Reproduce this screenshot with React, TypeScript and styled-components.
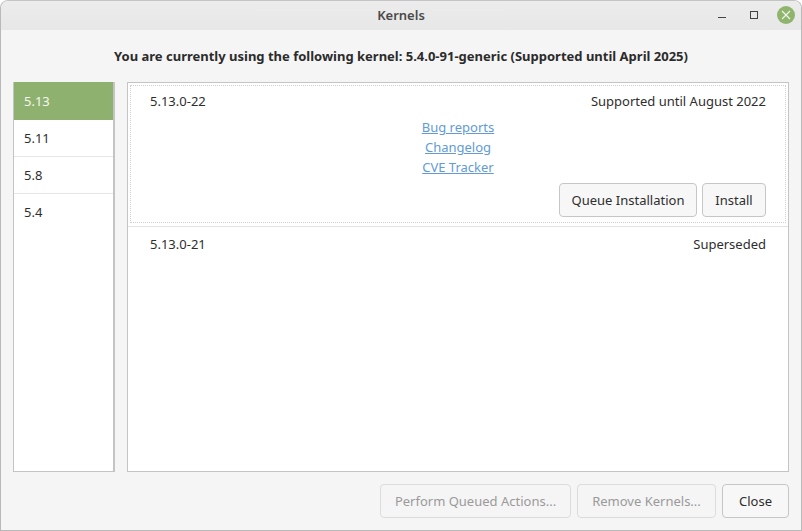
import React from 'react';
import styled, { createGlobalStyle } from 'styled-components';

const GlobalStyle = createGlobalStyle`
  html, body { margin: 0; padding: 0; background: #fff; }
  body { font-family: "Noto Sans", "Open Sans", sans-serif; font-size: 13px; color: #2e2e2e; }
`;

const Window = styled.div`
  box-sizing: border-box;
  width: 802px;
  height: 531px;
  display: flex;
  flex-direction: column;
  background: #f5f5f5;
  border: 1px solid #b9b9b9;
  border-top-color: #c4c4c4;
  border-radius: 8px 8px 0 0;
  overflow: hidden;
`;

const TitleBar = styled.header`
  position: relative;
  box-sizing: border-box;
  flex: 0 0 29px;
  padding-bottom: 2px;
  display: flex;
  align-items: center;
  justify-content: center;
  background: linear-gradient(#ececec, #e7e7e7);
  font-size: 13px;
  font-weight: 600;
  color: #4a4a4a;
`;

const WindowButtons = styled.div`
  position: absolute;
  right: 6px;
  top: 5px;
  display: flex;
  align-items: center;
`;

const WindowGlyph = styled.svg<{ $gap: number }>`
  width: 10px;
  height: 10px;
  margin-right: ${({ $gap }) => $gap}px;
`;

const CloseDot = styled.div`
  width: 18px;
  height: 18px;
  border-radius: 50%;
  background: #8fb46e;
  display: flex;
  align-items: center;
  justify-content: center;
`;

const Heading = styled.h1`
  margin: 0;
  padding: 17px 0 16px;
  height: 19px;
  line-height: 19px;
  box-sizing: content-box;
  text-align: center;
  font-size: 13px;
  font-weight: 700;
  color: #2b2b2b;
`;

const Panes = styled.div`
  flex: 1;
  display: flex;
  gap: 12px;
  padding: 0 12px;
  min-height: 0;
`;

const SideList = styled.ul`
  box-sizing: border-box;
  width: 102px;
  margin: 0;
  padding: 0;
  list-style: none;
  background: #fff;
  border: 1px solid #c4c4c4;
  border-right-width: 2px;
  border-top: 0;
`;

const SideItem = styled.li<{ $active?: boolean }>`
  box-sizing: border-box;
  height: ${({ $active }) => ($active ? '38px' : '37px')};
  padding-left: 10px;
  display: flex;
  align-items: center;
  background: ${({ $active }) => ($active ? '#8fb170' : '#fff')};
  color: ${({ $active }) => ($active ? '#f4f8ef' : '#2e2e2e')};
  border-bottom: ${({ $active }) => ($active ? '0' : '1px solid #e6e6e6')};
  &:last-child { border-bottom-color: transparent; }
`;

const Detail = styled.div`
  box-sizing: border-box;
  flex: 1;
  padding: 2px;
  background: #fff;
  border: 1px solid #c4c4c4;
`;

const KernelRow = styled.section<{ $focused?: boolean }>`
  box-sizing: border-box;
  height: ${({ $focused }) => ($focused ? '138px' : 'auto')};
  padding: ${({ $focused }) => ($focused ? '6px' : '7px')} 19px 0 19px;
  border: 1px dotted ${({ $focused }) => ($focused ? '#cfcfcf' : 'transparent')};
  display: flex;
  flex-direction: column;
`;

const Divider = styled.div`
  height: 1px;
  margin: 3px -2px 0;
  background: #e3e3e3;
`;

const RowHead = styled.div`
  display: flex;
  justify-content: space-between;
  height: 18px;
  line-height: 18px;
`;

const Links = styled.div`
  margin-top: 7px;
  display: flex;
  flex-direction: column;
  align-items: center;
  line-height: 20px;
`;

const Link = styled.a`
  color: #629bd6;
  text-decoration: underline;
  cursor: pointer;
`;

const RowActions = styled.div`
  margin-top: 6px;
  display: flex;
  justify-content: flex-end;
  gap: 5px;
`;

const Button = styled.button<{ $width: number }>`
  box-sizing: border-box;
  width: ${({ $width }) => $width}px;
  height: 34px;
  padding: 0;
  font: inherit;
  color: #2e2e2e;
  background: #f7f7f7;
  border: 1px solid #c6c6c6;
  border-radius: 4px;
  &:disabled { color: #9a9a9a; border-color: #dcdcdc; background: #f5f5f5; }
`;

const Footer = styled.footer`
  flex: 0 0 58px;
  box-sizing: border-box;
  padding: 12px 12px 0;
  display: flex;
  justify-content: flex-end;
  gap: 6px;
`;

export default function App(): JSX.Element {
  return (
    <Window>
      <GlobalStyle />
      <TitleBar>
        Kernels
        <WindowButtons>
          <WindowGlyph $gap={22} viewBox="0 0 10 10">
            <path d="M1 7.5h8" stroke="#444" strokeWidth="1" fill="none" />
          </WindowGlyph>
          <WindowGlyph $gap={18} viewBox="0 0 10 10">
            <rect x="1.5" y="1.5" width="7" height="7" stroke="#444" strokeWidth="1" fill="none" />
          </WindowGlyph>
          <CloseDot>
            <svg width="10" height="10" viewBox="0 0 10 10">
              <path d="M1 1l8 8M9 1l-8 8" stroke="#eef4e8" strokeWidth="1.2" fill="none" />
            </svg>
          </CloseDot>
        </WindowButtons>
      </TitleBar>
      <Heading>You are currently using the following kernel: 5.4.0-91-generic (Supported until April 2025)</Heading>
      <Panes>
        <SideList>
          <SideItem $active>5.13</SideItem>
          <SideItem>5.11</SideItem>
          <SideItem>5.8</SideItem>
          <SideItem>5.4</SideItem>
        </SideList>
        <Detail>
          <KernelRow $focused>
            <RowHead>
              <span>5.13.0-22</span>
              <span>Supported until August 2022</span>
            </RowHead>
            <Links>
              <Link>Bug reports</Link>
              <Link>Changelog</Link>
              <Link>CVE Tracker</Link>
            </Links>
            <RowActions>
              <Button $width={138}>Queue Installation</Button>
              <Button $width={64}>Install</Button>
            </RowActions>
          </KernelRow>
          <Divider />
          <KernelRow>
            <RowHead>
              <span>5.13.0-21</span>
              <span>Superseded</span>
            </RowHead>
          </KernelRow>
        </Detail>
      </Panes>
      <Footer>
        <Button $width={191} disabled>Perform Queued Actions...</Button>
        <Button $width={139} disabled>Remove Kernels...</Button>
        <Button $width={67}>Close</Button>
      </Footer>
    </Window>
  );
}
